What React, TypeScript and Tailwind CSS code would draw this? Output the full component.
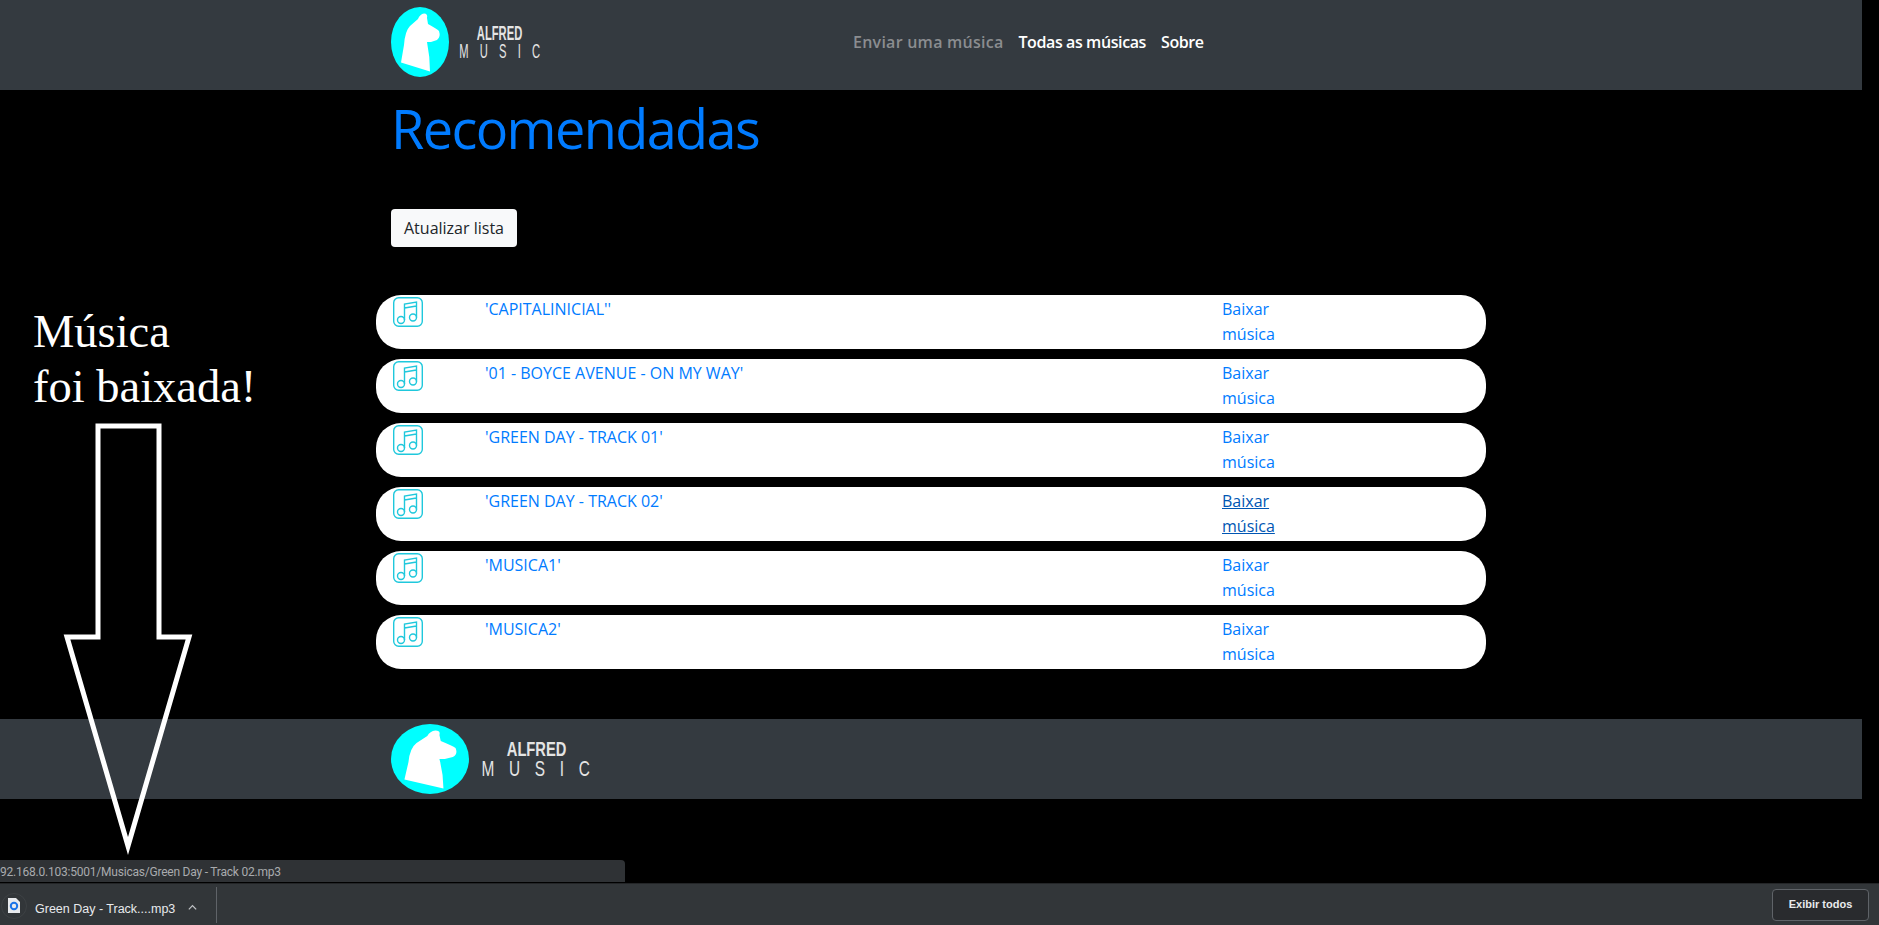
const songs = [
  "'CAPITALINICIAL''",
  "'01 - BOYCE AVENUE - ON MY WAY'",
  "'GREEN DAY - TRACK 01'",
  "'GREEN DAY - TRACK 02'",
  "'MUSICA1'",
  "'MUSICA2'",
];

function Llama({ className }: { className: string }) {
  return (
    <svg viewBox="0 0 58 70" preserveAspectRatio="none" className={className}>
      <ellipse cx="29" cy="35" rx="29" ry="35" fill="#00ffff" />
      <path
        d="M10 55.5 L13 38 Q14 24 19 19 L27 12 Q29 7 33 6.5 Q37 6.5 36 11 L37 17 Q46 22 48 24 Q50 30 46 33 L40 35 H36 Q39 50 39 64.5 Z"
        fill="#ffffff"
      />
    </svg>
  );
}

function Wordmark({ small }: { small?: boolean }) {
  return (
    <div className="flex flex-col items-center font-['Liberation_Sans',sans-serif] text-[#e4e4e4]">
      <span
        className={
          small
            ? "font-bold text-[20px] leading-[18px] scale-x-[0.56]"
            : "font-bold text-[21px] leading-[20px] scale-x-[0.7]"
        }
      >
        ALFRED
      </span>
      <span
        className={
          small
            ? "text-[20px] leading-[19px] tracking-[20px] mr-[-10px] scale-x-[0.56]"
            : "text-[22px] leading-[20px] tracking-[21px] mr-[-11px] scale-x-[0.7]"
        }
      >
        MUSIC
      </span>
    </div>
  );
}

function MusicIcon() {
  return (
    <svg viewBox="0 0 30 30" fill="none" stroke="#1fc8dc" strokeWidth="1.4" className="w-[30px] h-[30px]">
      <rect x="0.7" y="0.7" width="28.6" height="28.6" rx="5" />
      <circle cx="8" cy="23" r="3.5" />
      <circle cx="20" cy="20.5" r="3.5" />
      <path d="M11.5 23 V7 L23.5 5 V20.5 M11.5 11 L23.5 9" />
    </svg>
  );
}

export default function App() {
  return (
    <div className="relative h-[925px] overflow-hidden bg-black font-['Open_Sans',sans-serif]">
      <div className="w-[1862px]">
        <header className="h-[90px] bg-[#343a40]">
          <div className="mx-auto w-[1110px] pl-[15px] pb-[6px] flex items-center h-full">
            <Llama className="w-[58px] h-[70px]" />
            <div className="ml-[11px] w-[80px] flex justify-center">
              <Wordmark small />
            </div>
            <nav className="ml-[313px] flex gap-[15px] text-[16px] font-semibold">
              <a className="text-[#8b8d90] tracking-[0.25px]">Enviar uma música</a>
              <a className="text-white tracking-[-0.4px]">Todas as músicas</a>
              <a className="text-white tracking-[-0.4px]">Sobre</a>
            </nav>
          </div>
        </header>

        <main className="mx-auto w-[1110px]">
          <h1 className="pl-[15px] mt-[5px] text-[54px] leading-[67px] tracking-[-1.6px] text-[#007bff]">Recomendadas</h1>
          <button className="ml-[15px] mt-[47px] h-[38px] w-[126px] rounded bg-[#f8f9fa] text-[16px] text-[#212529]">
            Atualizar lista
          </button>
          <ul className="mt-[48px] flex flex-col gap-[10px]">
            {songs.map((song, i) => (
              <li key={song} className="flex h-[54px] rounded-[25px] bg-white pt-[2px] text-[16px] leading-[25px] text-[#007bff]">
                <div className="ml-[17px] w-[92px]">
                  <MusicIcon />
                </div>
                <span className="w-[737px]">{song}</span>
                <a className={i === 3 ? "w-[60px] text-[#0056b3] underline" : "w-[60px]"}>Baixar música</a>
              </li>
            ))}
          </ul>
        </main>

        <footer className="mt-[50px] h-[80px] bg-[#343a40]">
          <div className="mx-auto w-[1110px] pl-[15px] flex items-center h-full">
            <Llama className="w-[78px] h-[70px]" />
            <div className="ml-[14px] w-[108px] flex justify-center">
              <Wordmark />
            </div>
          </div>
        </footer>
      </div>

      <div className="absolute left-[33px] top-[304px] font-['Liberation_Serif',serif] text-[46.5px] leading-[55px] text-white">
        Música
        <br />
        foi baixada!
      </div>
      <svg className="absolute left-[60px] top-[420px] w-[140px] h-[440px]" viewBox="0 0 140 440" fill="none" stroke="#ffffff" strokeWidth="5">
        <path d="M38 6 H99 V217 H129 L68 426 L7 217 H38 Z" />
      </svg>

      <div className="absolute left-0 bottom-[43px] h-[22px] w-[625px] rounded-tr bg-[#2f3235] font-['Roboto',sans-serif] text-[12px] leading-[24px] tracking-[-0.22px] text-[#a9abae]">
        92.168.0.103:5001/Musicas/Green Day - Track 02.mp3
      </div>
      <div className="absolute left-0 right-0 bottom-0 h-[42px] flex items-center bg-[#323639] border-t border-[#232527] font-['Liberation_Sans',sans-serif] text-[12.5px] text-[#e8eaed]">
        <svg viewBox="0 0 26 26" className="ml-[1px] mt-[2px] w-[26px] h-[26px]">
          <circle cx="13" cy="13" r="12.5" fill="none" stroke="#3d4144" />
          <path d="M7 5 H15 L19 9 V20 H7 Z" fill="#e8eaed" />
          <circle cx="13" cy="13" r="3.2" fill="none" stroke="#1a73e8" strokeWidth="2" />
        </svg>
        <span className="ml-[8px] mt-[10px]">Green Day - Track....mp3</span>
        <svg viewBox="0 0 12 12" fill="none" stroke="#c0c3c6" strokeWidth="1.4" className="ml-[12px] w-[11px] h-[11px] mt-[6px]">
          <path d="M2 8 L6 4 L10 8" />
        </svg>
        <div className="ml-[18px] w-px h-[36px] bg-[#5f6368]" />
        <button className="ml-auto mr-[10px] h-[32px] w-[97px] rounded border border-[#5f6368] bg-[#292b2e] font-bold text-[11px] text-[#e8eaed]">
          Exibir todos
        </button>
      </div>
    </div>
  );
}
